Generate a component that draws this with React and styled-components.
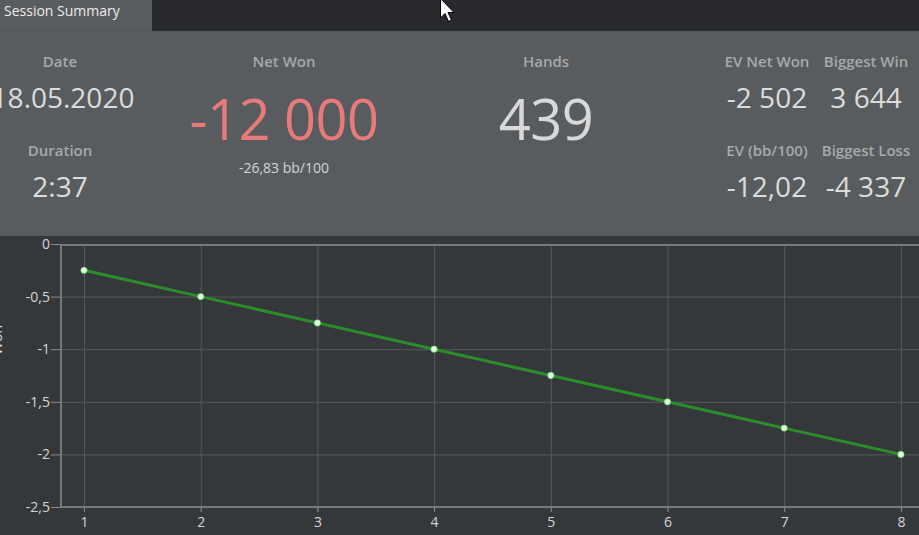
import React from "react";
import styled, { createGlobalStyle } from "styled-components";

const GlobalStyle = createGlobalStyle`
  html, body {
    margin: 0;
    padding: 0;
    background: #35383b;
    overflow: hidden;
  }
  body {
    font-family: "Open Sans", "DejaVu Sans", sans-serif;
  }
`;

const Screen = styled.div`
  position: relative;
  width: 919px;
  height: 535px;
  overflow: hidden;
  display: flex;
  flex-direction: column;
  background: #35383b;
`;

const TabBar = styled.div`
  height: 31px;
  display: flex;
  background: #27292c;
  flex-shrink: 0;
`;

const Tab = styled.div`
  width: 148px;
  padding: 1px 0 0 4px;
  background: #595c5f;
  color: #ececec;
  font-size: 14px;
  line-height: 20px;
  white-space: nowrap;
`;

const Summary = styled.div`
  height: 205px;
  flex-shrink: 0;
  display: flex;
  background: #595c5f;
  border-top: 1px solid #54575a;
  box-sizing: border-box;
  padding-top: 19px;
`;

const Column = styled.div`
  width: ${p => p.$width}px;
  margin-left: ${p => p.$offset || 0}px;
  display: flex;
  flex-direction: column;
  align-items: center;
`;

const Label = styled.div`
  font-size: 15px;
  font-weight: 600;
  line-height: 20px;
  color: #a7a9ab;
  white-space: nowrap;
  margin-top: ${p => p.$gap || 0}px;
`;

const Value = styled.div`
  font-size: 28px;
  line-height: 38px;
  color: #dcdcdc;
  white-space: nowrap;
  margin-top: 7px;
  padding-left: ${p => p.$shift || 0}px;
`;

const BigValue = styled.div`
  font-size: 56px;
  line-height: 70px;
  color: ${p => p.$negative ? "#e87a7a" : "#d9d9d9"};
  white-space: nowrap;
  margin-top: 12px;
  letter-spacing: -0.5px;
`;

const SubValue = styled.div`
  font-size: 14px;
  line-height: 20px;
  color: #d4d4d4;
  white-space: nowrap;
  margin-top: 5px;
`;

const ChartArea = styled.div`
  flex: 1;
  background: #35383b;
`;

const Cursor = styled.svg`
  position: absolute;
  left: 439px;
  top: -3px;
`;

const Stat = ({ label, value, gap, shift }) => (
  <>
    <Label $gap={gap}>{label}</Label>
    <Value $shift={shift}>{value}</Value>
  </>
);

const points = [-0.25, -0.5, -0.75, -1, -1.25, -1.5, -1.75, -2];
const yTicks = [
  { v: 0, t: "0" },
  { v: -0.5, t: "-0,5" },
  { v: -1, t: "-1" },
  { v: -1.5, t: "-1,5" },
  { v: -2, t: "-2" },
  { v: -2.5, t: "-2,5" }
];

const PLOT_LEFT = 60;
const PLOT_TOP = 8;
const PLOT_BOTTOM = 271;
const xOf = i => 84 + i * 116.7;
const yOf = v => PLOT_TOP + (-v / 2.5) * (PLOT_BOTTOM - PLOT_TOP);

const Chart = () => (
  <svg width="919" height="299" style={{ display: "block" }}>
    <defs>
      <radialGradient id="dot">
        <stop offset="0" stopColor="#ffffff" />
        <stop offset="0.5" stopColor="#eaffea" />
        <stop offset="1" stopColor="#7ae07a" />
      </radialGradient>
    </defs>
    <text
      transform="translate(2 89) rotate(-90)"
      fill="#d8d8d8"
      fontSize="14"
      fontFamily="Open Sans, sans-serif"
      textAnchor="end"
    >
      Won
    </text>
    {yTicks.map(({ v }) => (
      <g key={v}>
        <line x1={PLOT_LEFT} x2="919" y1={yOf(v) + 0.5} y2={yOf(v) + 0.5} stroke="#55595c" strokeWidth="1" />
        <line x1="51" x2={PLOT_LEFT} y1={yOf(v) + 0.5} y2={yOf(v) + 0.5} stroke="#8a8c8e" strokeWidth="1" />
      </g>
    ))}
    {points.map((_, i) => (
      <g key={i}>
        <line x1={xOf(i) + 0.5} x2={xOf(i) + 0.5} y1={PLOT_TOP} y2={PLOT_BOTTOM + 5} stroke="#55595c" strokeWidth="1" />
        <line x1={xOf(i) + 0.5} x2={xOf(i) + 0.5} y1={PLOT_BOTTOM} y2={PLOT_BOTTOM + 5} stroke="#8a8c8e" strokeWidth="1" />
      </g>
    ))}
    <line x1={PLOT_LEFT} x2="919" y1={PLOT_TOP + 1} y2={PLOT_TOP + 1} stroke="#77797b" strokeWidth="2" />
    <line x1={PLOT_LEFT} x2="919" y1={PLOT_BOTTOM} y2={PLOT_BOTTOM} stroke="#77797b" strokeWidth="2" />
    <line x1={PLOT_LEFT + 1} x2={PLOT_LEFT + 1} y1={PLOT_TOP} y2={PLOT_BOTTOM + 1} stroke="#77797b" strokeWidth="2" />
    {yTicks.map(({ v, t }) => (
      <text
        key={t}
        x="50"
        y={yOf(v) + 5}
        textAnchor="end"
        fill="#d6d6d6"
        fontSize="14"
        fontFamily="Open Sans, sans-serif"
      >
        {t}
      </text>
    ))}
    {points.map((_, i) => (
      <text
        key={i}
        x={xOf(i) + 0.5}
        y="291"
        textAnchor="middle"
        fill="#d6d6d6"
        fontSize="14"
        fontFamily="Open Sans, sans-serif"
      >
        {i + 1}
      </text>
    ))}
    <polyline
      points={points.map((v, i) => `${xOf(i)},${yOf(v)}`).join(" ")}
      fill="none"
      stroke="#2a8d2a"
      strokeWidth="3"
    />
    {points.map((v, i) => (
      <circle key={i} cx={xOf(i)} cy={yOf(v)} r="3.4" fill="url(#dot)" />
    ))}
  </svg>
);

export default function App() {
  return (
    <Screen>
      <GlobalStyle />
      <TabBar>
        <Tab>Session Summary</Tab>
      </TabBar>
      <Summary>
        <Column $width={120}>
          <Stat label="Date" value="18.05.2020" shift={6} />
          <Stat label="Duration" value="2:37" gap={24} />
        </Column>
        <Column $width={328}>
          <Label>Net Won</Label>
          <BigValue $negative>-12 000</BigValue>
          <SubValue>-26,83 bb/100</SubValue>
        </Column>
        <Column $width={196}>
          <Label>Hands</Label>
          <BigValue>439</BigValue>
        </Column>
        <Column $width={98} $offset={74}>
          <Stat label="EV Net Won" value="-2 502" />
          <Stat label="EV (bb/100)" value="-12,02" gap={24} />
        </Column>
        <Column $width={100}>
          <Stat label="Biggest Win" value="3 644" />
          <Stat label="Biggest Loss" value="-4 337" gap={24} />
        </Column>
      </Summary>
      <ChartArea>
        <Chart />
      </ChartArea>
      <Cursor width="20" height="28" viewBox="0 0 20 28">
        <path d="M1.5 1.5 L1.5 21 L6 16.5 L9.5 24.5 L12.5 23 L9 15.5 L15 15.5 Z" fill="#ffffff" stroke="#000000" strokeWidth="1" />
      </Cursor>
    </Screen>
  );
}
